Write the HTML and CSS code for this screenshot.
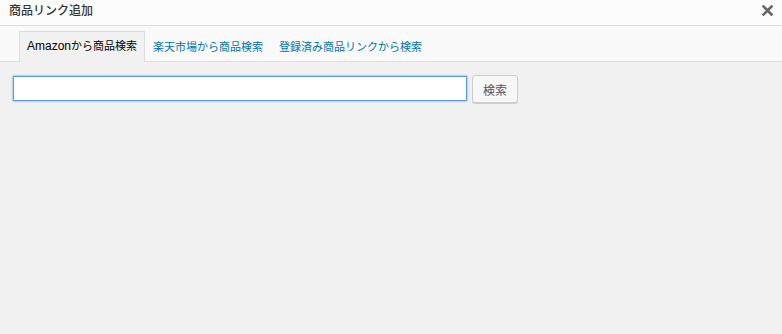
FILE: index.html
```html
<!DOCTYPE html>
<html lang="ja">
<head>
<meta charset="UTF-8">
<title>商品リンク追加</title>
<link rel="stylesheet" href="styles.css">
</head>
<body>
<div class="modal">
    <div class="modal-header">
        <h1 class="modal-title">商品リンク追加</h1>
        <a class="modal-close" href="#">
            <svg width="11" height="11" viewBox="0 0 11 11">
                <path d="M1.5 1.5 L9.5 9.5 M9.5 1.5 L1.5 9.5" stroke="#666" stroke-width="2.6" stroke-linecap="square"/>
            </svg>
        </a>
    </div>
    <div class="tabs">
        <a class="tab active" href="#"><span class="tab-latin">Amazon</span>から商品検索</a>
        <a class="tab" href="#">楽天市場から商品検索</a>
        <a class="tab" href="#">登録済み商品リンクから検索</a>
    </div>
    <div class="search-row">
        <input class="search-input" type="text">
        <button class="search-button">検索</button>
    </div>
</div>
</body>
</html>
```
FILE: styles.css
```css
body, html {
    margin: 0;
    padding: 0;
    height: 100%;
    overflow: hidden;
}

body {
    font-family: "Liberation Sans", "Noto Sans CJK JP", sans-serif;
    font-size: 12px;
    background: #f1f1f1;
    color: #333;
}

.modal-header {
    display: flex;
    align-items: center;
    justify-content: space-between;
    height: 25px;
    padding: 0 9px 0 9px;
    background: #fcfcfc;
    border-bottom: 1px solid #dddddd;
}

.modal-title {
    margin: 0;
    font-size: 12px;
    font-weight: 500;
    color: #333;
    line-height: 25px;
    margin-top: -2px;
}

.modal-close {
    display: flex;
    margin-top: -4px;
}

.tabs {
    display: flex;
    align-items: flex-end;
    height: 35px;
    padding-left: 19px;
    background: #f9f9f9;
    border-bottom: 1px solid #dddddd;
}

.tab {
    display: block;
    height: 29px;
    line-height: 28px;
    padding: 0 7px;
    font-size: 11px;
    color: #0073aa;
    text-decoration: none;
    border: 1px solid transparent;
    border-bottom: none;
    margin-bottom: -1px;
}

.tab-latin {
    font-size: 12px;
}

.tab.active {
    color: #000;
    background: #f1f1f1;
    border-color: #dddddd;
    height: 30px;
}

.search-row {
    display: flex;
    align-items: flex-start;
    gap: 5px;
    padding: 13px 13px;
}

.search-input {
    box-sizing: border-box;
    width: 454px;
    height: 25px;
    margin: 1px 0 0 0;
    border: 1px solid #5b9dd9;
    box-shadow: 0 0 2px rgba(30, 140, 190, 0.8);
    background: #fff;
    outline: none;
}

.search-button {
    box-sizing: border-box;
    height: 28px;
    width: 46px;
    padding: 0;
    font-family: "Noto Sans CJK JP", sans-serif;
    font-size: 12px;
    color: #555;
    background: #f7f7f7;
    border: 1px solid #cccccc;
    border-radius: 3px;
    box-shadow: 0 1px 0 #cccccc;
}
```
